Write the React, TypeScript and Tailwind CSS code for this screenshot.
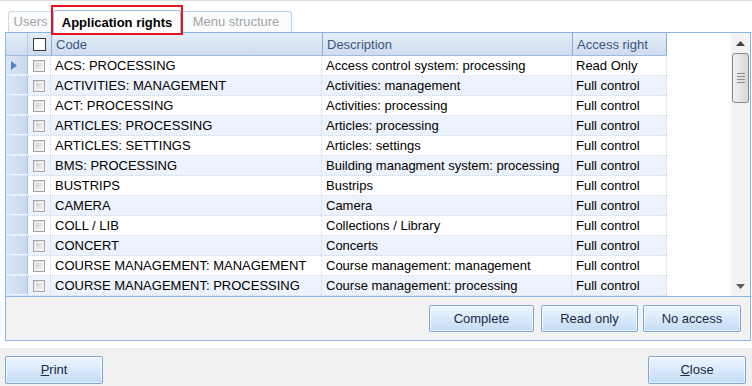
import { useState } from "react";

const rows = [
  ["ACS: PROCESSING", "Access control system: processing", "Read Only"],
  ["ACTIVITIES: MANAGEMENT", "Activities: management", "Full control"],
  ["ACT: PROCESSING", "Activities: processing", "Full control"],
  ["ARTICLES: PROCESSING", "Articles: processing", "Full control"],
  ["ARTICLES: SETTINGS", "Articles: settings", "Full control"],
  ["BMS: PROCESSING", "Building managment system: processing", "Full control"],
  ["BUSTRIPS", "Bustrips", "Full control"],
  ["CAMERA", "Camera", "Full control"],
  ["COLL / LIB", "Collections / Library", "Full control"],
  ["CONCERT", "Concerts", "Full control"],
  ["COURSE MANAGEMENT: MANAGEMENT", "Course management: management", "Full control"],
  ["COURSE MANAGEMENT: PROCESSING", "Course management: processing", "Full control"],
];

const Button = ({ children, className = "" }: { children: React.ReactNode; className?: string }) => (
  <button
    className={`h-[27px] border border-[#7ea6d6] rounded-[2px] bg-gradient-to-b from-[#eef6fe] via-[#d9e9fb] to-[#c3dbf6] shadow-[inset_0_0_0_1px_rgba(255,255,255,0.6)] text-[13px] text-[#1b2b40] ${className}`}
  >
    {children}
  </button>
);

const RowCheck = () => (
  <div className="w-[12px] h-[12px] border border-[#a4a4a4] bg-gradient-to-br from-[#dcdcdc] to-[#fbfbfb] p-[1px]">
    <div className="w-full h-full border border-[#f4f4f4] bg-gradient-to-br from-[#d2d2d2] to-[#f2f2f2]" />
  </div>
);

export default function App() {
  const [tab] = useState(1);

  return (
    <div
      className="w-[752px] h-[386px] bg-white flex flex-col overflow-hidden text-[13px] text-black"
      style={{ fontFamily: '"Liberation Sans", Arial, sans-serif' }}
    >
      {/* tabs */}
      <div className="border-t border-[#dcdcdc] h-[32px] flex items-end pl-[8px] relative">
        <div className="h-[21px] w-[45px] border border-b-0 border-[#cfdbe9] rounded-t-[3px] bg-[#fafcfe] text-[#a3a3a3] flex items-center justify-center">
          Users
        </div>
        <div className={`h-[23px] w-[128px] border border-b-0 border-[#9dbde3] rounded-t-[3px] bg-white font-bold flex items-center justify-center -mb-[1px] relative z-10 ${tab === 1 ? "pt-[1px]" : ""}`}>
          Application rights
        </div>
        <div className="h-[21px] w-[111px] border border-b-0 border-l-0 border-[#b6d0ee] rounded-tr-[3px] bg-[#fafcfe] text-[#a3a3a3] flex items-center justify-center">
          Menu structure
        </div>
        <div className="absolute left-[51px] top-[4px] w-[132px] h-[30px] border-2 border-[#e8141b] z-20 pointer-events-none" />
      </div>

      {/* panel */}
      <div className="ml-[5px] mr-[1px] h-[309px] border border-[#8ab4e8] bg-[#f2f2f2] flex flex-col">
        <div className="h-[264px] flex bg-white border-b border-[#8ab4e8]">
          <div className="w-[661px] flex flex-col">
            {/* header */}
            <div className="h-[24px] flex bg-gradient-to-b from-[#e6eef9] to-[#cfdcee] border-b border-[#9fbbe0] text-[#3a5683]">
              <div className="w-[22px] border-r border-[#b3c9e6]" />
              <div className="w-[23px] flex items-center justify-center">
                <div className="w-[13px] h-[13px] border border-[#3a3a3a] bg-white" />
              </div>
              <div className="w-[271px] flex items-center pl-[4px] pt-[1px] border-l border-[#89a9d6]">Code</div>
              <div className="w-[250px] flex items-center pl-[4px] pt-[1px] border-l border-[#89a9d6]">Description</div>
              <div className="w-[95px] flex items-center pl-[4px] pt-[1px] border-l border-r border-[#89a9d6]">Access right</div>
            </div>
            {rows.map((r, i) => (
              <div
                key={r[0]}
                className={`h-[20px] flex border-b border-dotted border-[#c9d9ee] ${i % 2 ? "bg-[#edf3fc]" : "bg-white"}`}
              >
                <div className="w-[22px] bg-gradient-to-r from-[#dae6f5] to-[#c9d9ee] border-r border-[#a9c2e3] border-b border-solid border-b-[#eef4fb] flex items-center pl-[5px]">
                  {i === 0 && (
                    <svg width="6" height="9" viewBox="0 0 6 9">
                      <path d="M0 0 L6 4.5 L0 9 Z" fill="#4f83c3" />
                    </svg>
                  )}
                </div>
                <div className="w-[23px] flex items-center justify-center border-r border-dotted border-[#c9d9ee]">
                  <RowCheck />
                </div>
                <div className="w-[271px] flex items-center pl-[4px] pt-[1px] border-r border-dotted border-[#c9d9ee] whitespace-nowrap overflow-hidden">{r[0]}</div>
                <div className="w-[250px] flex items-center pl-[4px] pt-[1px] border-r border-dotted border-[#c9d9ee] whitespace-nowrap overflow-hidden">{r[1]}</div>
                <div className="w-[95px] flex items-center pl-[4px] pt-[1px] border-r border-dotted border-[#c9d9ee] whitespace-nowrap">{r[2]}</div>
              </div>
            ))}
          </div>
          <div className="flex-1" />
          {/* scrollbar */}
          <div className="w-[19px] bg-[#f3f3f3] flex flex-col items-center">
            <div className="h-[20px] flex items-center justify-center">
              <svg width="9" height="5" viewBox="0 0 9 5">
                <path d="M0 5 L4.5 0 L9 5 Z" fill="#3f3f3f" />
              </svg>
            </div>
            <div className="w-[17px] h-[50px] border border-[#8a8a8a] rounded-[3px] bg-gradient-to-r from-[#f2f2f2] to-[#d8d8d8] flex flex-col items-center justify-center gap-[2px]">
              <div className="w-[8px] h-px bg-[#8c8c8c]" />
              <div className="w-[8px] h-px bg-[#8c8c8c]" />
              <div className="w-[8px] h-px bg-[#8c8c8c]" />
              <div className="w-[8px] h-px bg-[#8c8c8c]" />
            </div>
            <div className="flex-1" />
            <div className="h-[20px] flex items-center justify-center">
              <svg width="9" height="5" viewBox="0 0 9 5">
                <path d="M0 0 L4.5 5 L9 0 Z" fill="#5f5f5f" />
              </svg>
            </div>
          </div>
        </div>
        <div className="flex justify-end pt-[8px] pr-[9px]">
          <Button className="w-[105px]">Complete</Button>
          <Button className="w-[97px] ml-[7px]">Read only</Button>
          <Button className="w-[98px] ml-[5px]">No access</Button>
        </div>
      </div>

      {/* bottom bar */}
      <div className="h-[7px] bg-white" />
      <div className="flex-1 bg-[#f0f0f0] flex justify-between items-start pt-[8px] px-[5px]">
        <Button className="w-[98px] h-[28px]">
          <span className="underline">P</span>rint
        </Button>
        <Button className="w-[98px] h-[28px] mr-[1px]">
          <span className="underline">C</span>lose
        </Button>
      </div>
    </div>
  );
}
